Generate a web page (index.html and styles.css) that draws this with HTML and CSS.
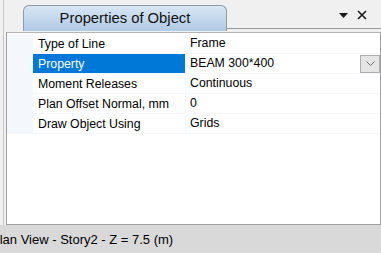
FILE: index.html
```html
<!DOCTYPE html>
<html>
<head>
<meta charset="utf-8">
<link rel="stylesheet" href="styles.css">
</head>
<body>
<div class="window">
  <div class="dock">
    <div class="tabstrip">
      <div class="tab">Properties of Object</div>
      <div class="strip-rest">
        <span class="ctl ctl-menu"><svg width="9" height="5" viewBox="0 0 9 5"><path d="M0 0H9L4.5 5Z" fill="#1a1a1a"/></svg></span>
        <span class="ctl ctl-close"><svg width="10" height="10" viewBox="0 0 10 10"><path d="M1 1L9 9M9 1L1 9" stroke="#1a1a1a" stroke-width="1.6"/></svg></span>
      </div>
    </div>
    <div class="panel">
      <div class="grid">
        <div class="row"><div class="margin"></div><div class="name">Type of Line</div><div class="value">Frame</div></div>
        <div class="row"><div class="margin"></div><div class="name selected">Property</div><div class="value">BEAM 300*400<span class="dd"><svg width="9" height="5" viewBox="0 0 9 5"><path d="M0.5 0.5L4.5 4.5L8.5 0.5" fill="none" stroke="#707070" stroke-width="1"/></svg></span></div></div>
        <div class="row"><div class="margin"></div><div class="name">Moment Releases</div><div class="value">Continuous</div></div>
        <div class="row"><div class="margin"></div><div class="name">Plan Offset Normal, mm</div><div class="value">0</div></div>
        <div class="row"><div class="margin"></div><div class="name">Draw Object Using</div><div class="value">Grids</div></div>
      </div>
    </div>
  </div>
  <div class="status">Plan View - Story2 - Z = 7.5 (m)</div>
</div>
</body>
</html>
```

FILE: styles.css
```css
html, body {
  margin: 0;
  padding: 0;
}
body {
  width: 381px;
  height: 253px;
  overflow: hidden;
  background: #f0f0f0;
  font-family: "Segoe UI", "Liberation Sans", Arial, sans-serif;
  color: #000;
}
.window {
  display: flex;
  flex-direction: column;
  height: 253px;
}
.dock {
  height: 225px;
  flex: none;
  border-left: 1px solid #c8c8c8;
  margin-left: 3px;
  padding-left: 2px;
  display: flex;
  flex-direction: column;
  box-sizing: border-box;
}
.tabstrip {
  height: 31px;
  display: flex;
  align-items: flex-end;
  padding-left: 17px;
  box-sizing: border-box;
}
.tab {
  width: 204px;
  height: 26px;
  box-sizing: border-box;
  border: 1px solid #8d9bab;
  border-bottom: none;
  border-radius: 6px 6px 0 0;
  background: linear-gradient(#d8e6f4, #b0c9e5);
  font-size: 14.8px;
  text-align: center;
  line-height: 24px;
  color: #111;
}
.strip-rest {
  flex: 1;
  height: 29px;
  align-self: flex-start;
  border-bottom: 1px solid #9a9a9a;
  box-sizing: border-box;
  display: flex;
  justify-content: flex-end;
  align-items: center;
  padding-right: 14px;
  gap: 9px;
  padding-top: 2px;
}
.ctl {
  display: flex;
  align-items: center;
}
.panel {
  flex: 1;
  background: #fff;
  border: 1px solid #a0a0a0;
  border-top-color: #b4b4b4;
  margin-top: 1px;
}
.grid {
  display: flex;
  flex-direction: column;
  font-size: 12.3px;
  padding-top: 1px;
}
.row {
  display: flex;
  height: 20px;
  border-bottom: 1px solid #f4f7fc;
  box-sizing: border-box;
}
.margin {
  width: 26px;
  background: #f4f7fc;
}
.name {
  width: 153px;
  padding-left: 5px;
  box-sizing: border-box;
  line-height: 21px;
  border-right: 1px solid #f4f7fc;
}
.name.selected {
  background: #0078d7;
  color: #fff;
}
.value {
  flex: 1;
  padding-left: 4px;
  line-height: 21px;
  display: flex;
  justify-content: space-between;
  align-items: center;
}
.dd {
  width: 20px;
  height: 18px;
  box-sizing: border-box;
  border: 1px solid #adadad;
  background: #e5e5e5;
  display: flex;
  align-items: center;
  justify-content: center;
}
.status {
  flex: 1;
  background: #d9d9d9;
  font-size: 13px;
  line-height: 22px;
  padding-top: 4px;
  margin-left: -9px;
  white-space: nowrap;
}
```
